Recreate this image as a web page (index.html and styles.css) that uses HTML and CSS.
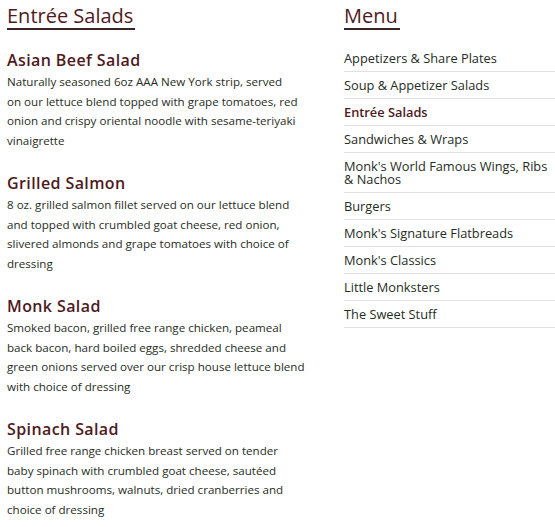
FILE: index.html
```html
<!DOCTYPE html>
<html lang="en">
<head>
<meta charset="utf-8">
<title>Entrée Salads</title>
<link rel="stylesheet" href="styles.css">
</head>
<body>
<div class="page">
  <main class="content">
    <h1 class="section-title">Entrée Salads</h1>
    <div class="items">
      <article class="item">
        <h2 class="item-name">Asian Beef Salad</h2>
        <p class="item-desc">Naturally seasoned 6oz AAA New York strip, served<br>on our lettuce blend topped with grape tomatoes, red onion and crispy oriental noodle with sesame-teriyaki vinaigrette</p>
      </article>
      <article class="item">
        <h2 class="item-name">Grilled Salmon</h2>
        <p class="item-desc">8 oz. grilled salmon fillet served on our lettuce blend and topped with crumbled goat cheese, red onion, slivered almonds and grape tomatoes with choice of dressing</p>
      </article>
      <article class="item">
        <h2 class="item-name">Monk Salad</h2>
        <p class="item-desc">Smoked bacon, grilled free range chicken, peameal back bacon, hard boiled eggs, shredded cheese and green onions served over our crisp house lettuce blend with choice of dressing</p>
      </article>
      <article class="item">
        <h2 class="item-name">Spinach Salad</h2>
        <p class="item-desc">Grilled free range chicken breast served on tender baby spinach with crumbled goat cheese, sautéed button mushrooms, walnuts, dried cranberries and choice of dressing</p>
      </article>
    </div>
  </main>
  <aside class="sidebar">
    <h1 class="section-title">Menu</h1>
    <ul class="menu-list">
      <li class="menu-item">Appetizers &amp; Share Plates</li>
      <li class="menu-item">Soup &amp; Appetizer Salads</li>
      <li class="menu-item active">Entrée Salads</li>
      <li class="menu-item">Sandwiches &amp; Wraps</li>
      <li class="menu-item">Monk's World Famous Wings, Ribs &amp; Nachos</li>
      <li class="menu-item">Burgers</li>
      <li class="menu-item">Monk's Signature Flatbreads</li>
      <li class="menu-item">Monk's Classics</li>
      <li class="menu-item">Little Monksters</li>
      <li class="menu-item">The Sweet Stuff</li>
    </ul>
  </aside>
</div>
</body>
</html>
```
FILE: styles.css
```css
html, body {
  margin: 0;
  padding: 0;
  background: #ffffff;
}
body {
  font-family: "Open Sans", "Lato", sans-serif;
  color: #1f2d24;
  overflow: hidden;
}
.page {
  display: flex;
  align-items: flex-start;
  padding-left: 7px;
}
.content {
  width: 300px;
  flex: none;
}
.sidebar {
  margin-left: 37px;
  flex: 1;
  min-width: 0;
}
.section-title {
  display: inline-block;
  margin: 4px 0 0;
  padding: 0 2px 0 0;
  font-size: 20px;
  line-height: 24px;
  font-weight: 500;
  color: #4e1a1d;
  border-bottom: 2px solid #3b2224;
}
.items {
  margin-top: 20px;
}
.item {
  margin-bottom: 23px;
}
.item-name {
  margin: 0 0 2px;
  font-size: 16px;
  line-height: 20px;
  font-weight: 600;
  color: #4e1a1d;
  letter-spacing: 0.4px;
}
.item-desc {
  margin: 0;
  font-size: 11.6px;
  line-height: 19.5px;
}
.menu-list {
  list-style: none;
  margin: 15px 0 0;
  padding: 0;
}
.menu-item {
  font-size: 12.8px;
  line-height: 13px;
  padding: 6.5px 0;
  border-bottom: 1px solid #e2e2e2;
}
.menu-item.active {
  color: #4e1a1d;
  font-weight: 600;
}
```
